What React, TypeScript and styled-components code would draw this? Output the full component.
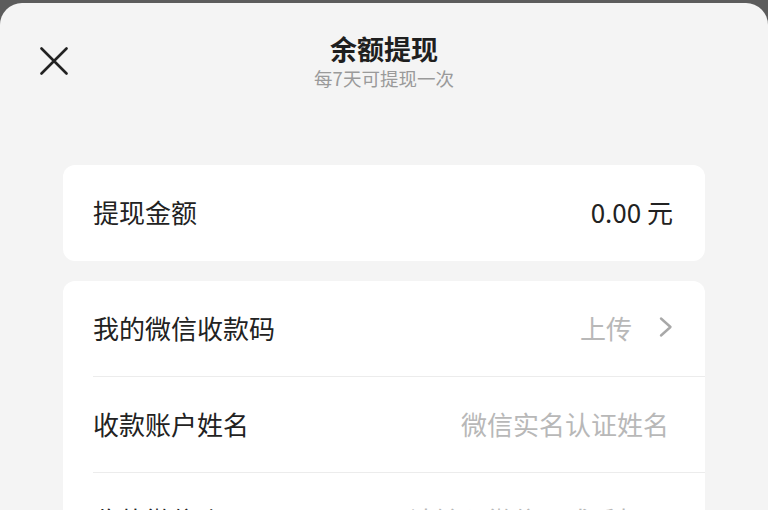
import React from 'react'
import styled, { createGlobalStyle } from 'styled-components'

const GlobalStyle = createGlobalStyle`
  html, body {
    margin: 0;
    padding: 0;
    background: #5c5c5c;
    font-family: "Noto Sans CJK SC", "Noto Sans", sans-serif;
  }
`

const Sheet = styled.div`
  background: #f4f4f4;
  border-radius: 22px 22px 0 0;
  margin-top: 3px;
  min-height: 507px;
  overflow: hidden;
`

const Header = styled.header`
  align-items: center;
  display: grid;
  grid-template-columns: 1fr auto 1fr;
  padding: 28px 40px 0;
`

const CloseButton = styled.button`
  align-items: center;
  background: none;
  border: none;
  cursor: pointer;
  display: flex;
  height: 28px;
  justify-content: flex-start;
  margin: 0;
  padding: 0;
  width: 28px;
`

const TitleBlock = styled.div`
  align-items: center;
  display: flex;
  flex-direction: column;
`

const Title = styled.h1`
  color: #1f1f1f;
  font-size: 27px;
  font-weight: 700;
  line-height: 36px;
  margin: 0;
`

const Subtitle = styled.p`
  color: #9a9a9a;
  font-size: 18.5px;
  line-height: 24px;
  margin: -1px 0 0;
`

const Body = styled.main`
  display: flex;
  flex-direction: column;
  gap: 20px;
  padding: 75px 63px 0;
`

const Card = styled.section`
  background: #ffffff;
  border-radius: 12px;
  display: flex;
  flex-direction: column;
`

const Row = styled.div<{ $divider?: boolean }>`
  align-items: center;
  box-sizing: border-box;
  display: flex;
  height: 96px;
  justify-content: space-between;
  margin-left: 30px;
  padding: 0 32px 3px 0;
  border-bottom: ${({ $divider }) => ($divider ? '1px solid #ececec' : 'none')};
`

const Label = styled.span`
  color: #222222;
  font-size: 26px;
`

const Value = styled.span<{ $muted?: boolean; $withIcon?: boolean }>`
  align-items: center;
  color: ${({ $muted }) => ($muted ? '#b8b8b8' : '#222222')};
  display: flex;
  font-size: 26px;
  gap: 26px;
  margin-right: ${({ $muted, $withIcon }) => ($muted && !$withIcon ? '4px' : '0')};
`

const Chevron = () => (
  <svg width="15" height="22" viewBox="0 0 15 22" fill="none">
    <path d="M3 2.5l9.5 8.5-9.5 8.5" stroke="#a8a8a8" strokeWidth="2.4" strokeLinecap="round" strokeLinejoin="round" />
  </svg>
)

const CloseIcon = () => (
  <svg width="28" height="28" viewBox="0 0 28 28" fill="none">
    <path d="M1.5 1.5l25 25M26.5 1.5l-25 25" stroke="#222" strokeWidth="2.6" strokeLinecap="round" />
  </svg>
)

const App: React.FC = () => {
  return (
    <>
      <GlobalStyle />
      <Sheet>
        <Header>
          <CloseButton aria-label="关闭">
            <CloseIcon />
          </CloseButton>
          <TitleBlock>
            <Title>余额提现</Title>
            <Subtitle>每7天可提现一次</Subtitle>
          </TitleBlock>
          <span />
        </Header>
        <Body>
          <Card>
            <Row>
              <Label>提现金额</Label>
              <Value>0.00 元</Value>
            </Row>
          </Card>
          <Card>
            <Row $divider>
              <Label>我的微信收款码</Label>
              <Value $muted $withIcon>
                上传
                <Chevron />
              </Value>
            </Row>
            <Row $divider>
              <Label>收款账户姓名</Label>
              <Value $muted>微信实名认证姓名</Value>
            </Row>
            <Row>
              <Label>收款微信账号</Label>
              <Value $muted>请输入微信号或手机号</Value>
            </Row>
          </Card>
        </Body>
      </Sheet>
    </>
  )
}

export default App
